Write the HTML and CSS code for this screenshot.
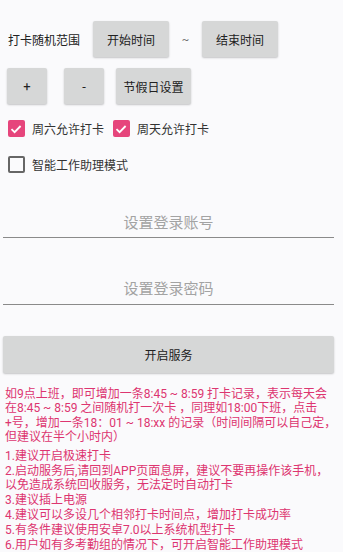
FILE: index.html
```html
<!DOCTYPE html>
<html>
<head>
<meta charset="utf-8">
<link rel="stylesheet" href="styles.css">
</head>
<body>
<div class="row r1">
  <span class="label">打卡随机范围</span>
  <button class="btn b-start">开始时间</button>
  <span class="tilde">~</span>
  <button class="btn b-end">结束时间</button>
</div>
<div class="row r2">
  <button class="btn b-small">+</button>
  <button class="btn b-small b-minus">-</button>
  <button class="btn b-holiday">节假日设置</button>
</div>
<div class="check-row c1">
  <span class="cb on"><svg viewBox="0 0 16 16" width="16" height="16"><polyline points="3.5,8.2 6.6,11.2 12.6,5" fill="none" stroke="#fff" stroke-width="1.8"/></svg></span>
  <span class="cl">周六允许打卡</span>
  <span class="cb on cb2"><svg viewBox="0 0 16 16" width="16" height="16"><polyline points="3.5,8.2 6.6,11.2 12.6,5" fill="none" stroke="#fff" stroke-width="1.8"/></svg></span>
  <span class="cl">周天允许打卡</span>
</div>
<div class="check-row c2">
  <span class="cb off"></span>
  <span class="cl">智能工作助理模式</span>
</div>
<div class="field f1"><span class="hint">设置登录账号</span></div>
<div class="field f2"><span class="hint">设置登录密码</span></div>
<button class="btn start">开启服务</button>
<div class="notes">
  <p class="intro">如9点上班，即可增加一条8:45 ~ 8:59 打卡记录，表示每天会<br>在8:45 ~ 8:59 之间随机打一次卡 ，同理如18:00下班，点击<br>+号，增加一条18：01 ~ 18:xx 的记录（时间间隔可以自己定，<br>但建议在半个小时内）</p>
  <p class="item first">1.建议开启极速打卡</p>
  <p class="item">2.启动服务后,请回到APP页面息屏，建议不要再操作该手机，<br>以免造成系统回收服务，无法定时自动打卡</p>
  <p class="item">3.建议插上电源</p>
  <p class="item">4.建议可以多设几个相邻打卡时间点，增加打卡成功率</p>
  <p class="item">5.有条件建议使用安卓7.0以上系统机型打卡</p>
  <p class="item">6.用户如有多考勤组的情况下，可开启智能工作助理模式</p>
</div>
</body>
</html>
```
FILE: styles.css
```css
* { box-sizing: border-box; }
html, body {
  margin: 0;
  padding: 0;
  background: #fafafc;
  font-family: Roboto, "Noto Sans CJK SC", sans-serif;
  color: #222;
  width: 343px;
  height: 552px;
  overflow: hidden;
}
.row {
  display: flex;
  align-items: center;
  height: 36px;
}
.r1 { margin-top: 21px; padding-left: 8px; }
.r2 { margin-top: 11px; padding-left: 7px; }
.label { font-size: 12px; width: 72px; color: #222; }
.btn {
  border: none;
  background: #d6d7d7;
  border-radius: 2px;
  box-shadow: 0 1px 2px rgba(0, 0, 0, 0.22);
  font-family: Roboto, "Noto Sans CJK SC", sans-serif;
  font-size: 12px;
  color: #222;
  height: 36px;
  padding: 0;
  display: flex;
  align-items: center;
  justify-content: center;
}
.b-start { margin-left: 13px; width: 76px; }
.tilde { width: 33px; text-align: center; font-size: 11px; color: #666; }
.b-end { width: 76px; }
.b-small { width: 40px; font-size: 13px; }
.b-minus { margin-left: 17px; }
.b-holiday { margin-left: 12px; width: 75px; }
.check-row {
  display: flex;
  align-items: center;
  height: 17px;
  padding-left: 8px;
}
.c1 { margin-top: 16px; }
.c2 { margin-top: 19px; }
.cb {
  width: 16.5px;
  height: 16.5px;
  border-radius: 2px;
  display: flex;
  align-items: center;
  justify-content: center;
  flex-shrink: 0;
}
.cb.on { background: #e6457c; }
.cb.off { border: 2px solid #666; }
.cb2 { margin-left: 9px; }
.cl { font-size: 12px; color: #333; margin-left: 7.5px; }
.field {
  margin-left: 3px;
  width: 331px;
  border-bottom: 1px solid #8a8a8a;
  text-align: center;
}
.f1 { margin-top: 40px; padding-bottom: 4px; }
.f2 { margin-top: 41px; padding-bottom: 5px; }
.hint {
  display: block;
  font-size: 15px;
  line-height: 20px;
  color: #a3a3a3;
}
.start {
  margin-top: 31px;
  margin-left: 3px;
  width: 331px;
  height: 37px;
}
.notes {
  margin-top: 14px;
  padding-left: 5px;
  color: #dd3570;
  font-size: 12px;
  line-height: 14.4px;
}
.notes p { margin: 0; white-space: nowrap; }
.notes .intro { margin-bottom: 4px; }
.notes .item { margin-bottom: 0.5px; }
```
